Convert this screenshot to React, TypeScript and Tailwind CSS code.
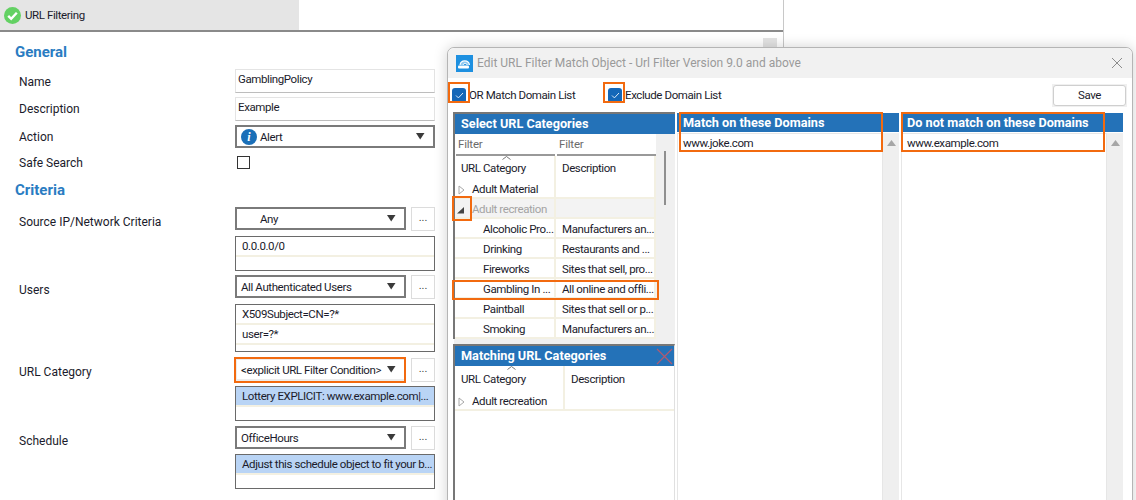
import type { ReactNode } from "react";

const font = "font-['Roboto','Open_Sans',sans-serif]";
const small = "text-[11.5px] tracking-[-0.4px] text-[#1b1b2b]";

function Arrow() {
  return (
    <svg width="9" height="7" viewBox="0 0 9 7" className="shrink-0">
      <path d="M0 0h8.5L4.2 6.5z" fill="#3a3a3a" />
    </svg>
  );
}

function Combo({ text, icon, pad = "pl-[4px]", wide, plain }: { text: string; icon?: ReactNode; pad?: string; wide?: boolean; plain?: boolean }) {
  return (
    <div className={`flex items-center h-[23px] border-2 bg-white pr-[8px] ${plain ? "border-[#ececec]" : "border-[#7a7a7a]"} ${pad} ${wide ? "w-[200px]" : "w-[171px]"}`}>
      {icon}
      <span className={`flex-1 whitespace-nowrap pt-[2px] ${small}`}>{text}</span>
      <Arrow />
    </div>
  );
}

function Dots() {
  return (
    <div className="w-[24px] h-[24px] border border-[#dcdcdc] bg-white flex items-center justify-center text-[11px] text-[#444] pb-[1px]">...</div>
  );
}

function ComboRow({ text, pad, highlight }: { text: string; pad?: string; highlight?: boolean }) {
  return (
    <div className="flex gap-[5px] items-start">
      <div className="relative">
        <Combo text={text} pad={pad} plain={highlight} />
        {highlight && <div className="absolute -left-[1px] -top-[1px] w-[172px] h-[26px] border-[2px] border-[#f26a0f]" />}
      </div>
      <Dots />
    </div>
  );
}

function ListBox({ items, height, selected }: { items: string[]; height: string; selected?: boolean }) {
  return (
    <div className={`w-[200px] border border-[#6a6a6a] bg-white ${height}`}>
      {items.map((t) => (
        <div
          key={t}
          className={`h-[20px] flex items-center pl-[6px] pt-[2px] border-b-2 border-[#f3f0e2] whitespace-nowrap ${small} ${selected ? "bg-[#b9d4f5]" : ""}`}
        >
          {t}
        </div>
      ))}
    </div>
  );
}

function Label({ children, top }: { children: ReactNode; top: string }) {
  return <div className={`w-[235px] pl-[19px] shrink-0 text-[12px] text-[#1b1b2b] ${top}`}>{children}</div>;
}

function Heading({ children, className }: { children: ReactNode; className: string }) {
  return <div className={`pl-[15px] text-[15px] font-bold text-[#2a7cc2] leading-[20px] ${className}`}>{children}</div>;
}

function Check({ label, className, boxClass }: { label: string; className?: string; boxClass: string }) {
  return (
    <div className={`flex items-center relative ${className ?? ""}`}>
      <div className="w-[14px] h-[15px] rounded-[3px] bg-[#1467b8] flex items-center justify-center">
        <svg width="9" height="7" viewBox="0 0 9 7">
          <path d="M1 3.5l2.4 2.4L8 1" fill="none" stroke="#dbe9f7" strokeWidth="1" />
        </svg>
      </div>
      <div className={`absolute border-[2px] border-[#f26a0f] ${boxClass}`} />
      <span className={`ml-[3px] whitespace-nowrap pt-[1px] ${small}`}>{label}</span>
    </div>
  );
}

function Tri() {
  return (
    <svg width="7" height="10" viewBox="0 0 7 10" className="shrink-0">
      <path d="M1 1l5 4-5 4z" fill="none" stroke="#a8a8a8" />
    </svg>
  );
}

function TreeRow({ a, b }: { a: string; b: string }) {
  return (
    <div className={`flex h-[20px] whitespace-nowrap ${small}`}>
      <div className="w-[101px] pl-[28px] pt-[4px] flex items-center border-b-2 border-r-2 border-[#f3f0e2]">{a}</div>
      <div className="w-[100px] pl-[6px] pt-[4px] flex items-center border-b-2 border-r-2 border-[#f3f0e2]">{b}</div>
    </div>
  );
}

function DomainCol({ title, value, mark }: { title: string; value: string; mark: string }) {
  return (
    <div className="w-[222px] shrink-0 flex flex-col relative">
      <div className="h-[20px] mt-[1px] bg-[#2472b8] pl-[6px] flex items-center text-[12.7px] font-bold text-white whitespace-nowrap">{title}</div>
      <div className="flex flex-1 mt-[1px]">
        <div className={`w-[206px] border border-[#e6e6e6] pl-[5px] pt-[1px] h-[400px] ${small}`}>{value}</div>
        <div className="w-[16px] bg-[#efefef] flex justify-center pt-[7px]">
          <svg width="9" height="6" viewBox="0 0 9 6">
            <path d="M4.5 0L9 6H0z" fill="#a6a6a6" />
          </svg>
        </div>
      </div>
      <div className={`absolute top-0 w-[204px] h-[40px] border-[2px] border-[#f26a0f] ${mark}`} />
    </div>
  );
}

export default function App() {
  const rows = [
    ["Alcoholic Pro...", "Manufacturers an..."],
    ["Drinking", "Restaurants and ..."],
    ["Fireworks", "Sites that sell, pro..."],
    ["Gambling In ...", "All online and offli..."],
    ["Paintball", "Sites that sell or p..."],
    ["Smoking", "Manufacturers an..."],
  ];

  return (
    <div className={`relative w-[1136px] h-[500px] overflow-hidden bg-white ${font}`}>
      {/* main policy window */}
      <div className="w-[784px] h-[500px] border-r border-[#c8c8c8] flex flex-col">
        <div className="h-[32px] shrink-0 border-b-2 border-[#8a8a8a]">
          <div className="w-[299px] h-[30px] bg-[#e5e5e5] flex items-center pl-[4px] gap-[4px]">
            <svg width="17" height="17" viewBox="0 0 17 17">
              <circle cx="8.5" cy="8.5" r="8.5" fill="#63d163" />
              <path d="M4.2 8.8l3 3 5.6-6" fill="none" stroke="#fff" strokeWidth="2.4" />
            </svg>
            <span className={`pt-[1px] ${small}`}>URL Filtering</span>
          </div>
        </div>

        <Heading className="mt-[10px]">General</Heading>
        <div className="flex mt-[7px]">
          <Label top="pt-[4px]">Name</Label>
          <div className={`w-[200px] h-[24px] border border-[#e4e4e4] border-b-[#bdbdbd] pl-[2px] leading-[19px] ${small}`}>GamblingPolicy</div>
        </div>
        <div className="flex mt-[4px]">
          <Label top="pt-[3px]">Description</Label>
          <div className={`w-[200px] h-[24px] border border-[#e4e4e4] border-b-[#bdbdbd] pl-[2px] leading-[19px] ${small}`}>Example</div>
        </div>
        <div className="flex mt-[4px]">
          <Label top="pt-[3px]">Action</Label>
          <Combo
            wide
            text="Alert"
            icon={
              <span className="w-[16px] h-[16px] mr-[3px] rounded-full bg-[#1a6fb8] text-white text-[12px] font-bold italic flex items-center justify-center font-['Liberation_Serif',serif]">
                i
              </span>
            }
          />
        </div>
        <div className="flex mt-[8px] h-[15px]">
          <Label top="leading-[15px]">Safe Search</Label>
          <div className="ml-[2px] w-[13px] h-[13px] border border-[#333] bg-white" />
        </div>
        <Heading className="mt-[9px]">Criteria</Heading>

        <div className="flex mt-[7px]">
          <Label top="pt-[6px]">Source IP/Network Criteria</Label>
          <div className="flex flex-col gap-[5px]">
            <ComboRow text="Any" pad="pl-[23px]" />
            <ListBox items={["0.0.0.0/0"]} height="h-[35px]" />
          </div>
        </div>
        <div className="flex mt-[4px]">
          <Label top="pt-[6px]">Users</Label>
          <div className="flex flex-col gap-[5px]">
            <ComboRow text="All Authenticated Users" />
            <ListBox items={["X509Subject=CN=?*", "user=?*"]} height="h-[48px]" />
          </div>
        </div>
        <div className="flex mt-[6px]">
          <Label top="pt-[5px]">URL Category</Label>
          <div className="flex flex-col gap-[4px]">
            <ComboRow text="<explicit URL Filter Condition>" highlight />
            <ListBox items={["Lottery EXPLICIT: www.example.com|..."]} height="h-[35px]" selected />
          </div>
        </div>
        <div className="flex mt-[5px]">
          <Label top="pt-[6px]">Schedule</Label>
          <div className="flex flex-col gap-[4px]">
            <ComboRow text="OfficeHours" />
            <ListBox items={["Adjust this schedule object to fit your b..."]} height="h-[35px]" selected />
          </div>
        </div>
      </div>

      {/* scrollbar stub behind the dialog */}
      <div className="absolute left-[763px] top-[38px] w-[14px] h-[9px] bg-[#e3e3e3]" />

      {/* match object dialog */}
      <div className="absolute left-[447px] top-[47px] w-[686px] h-[470px] rounded-t-[7px] border border-[#b5b5b5] bg-white shadow-[0_0_14px_rgba(0,0,0,0.18)] flex flex-col">
        <div className="h-[30px] shrink-0 bg-[#f1f1f1] rounded-t-[7px] flex items-center pl-[8px]">
          <svg width="17" height="17" viewBox="0 0 17 17" className="shrink-0">
            <rect width="17" height="17" fill="#1e90e0" />
            <path d="M4 10a4.8 4.8 0 0 1 9.5 0" fill="#8fc8ef" stroke="#fff" strokeWidth="1.1" />
            <path d="M7 10a2.2 2.2 0 0 1 4.2 0" fill="#1e90e0" stroke="#fff" strokeWidth="0.9" />
            <rect x="2" y="10.5" width="11" height="3" rx="1" fill="#fff" />
          </svg>
          <span className="ml-[4px] text-[12px] text-[#9a9a9a] whitespace-nowrap">Edit URL Filter Match Object - Url Filter Version 9.0 and above</span>
          <svg width="12" height="12" viewBox="0 0 12 12" className="ml-auto mr-[9px]">
            <path d="M1 1l10 10M11 1L1 11" stroke="#8c8c8c" fill="none" />
          </svg>
        </div>

        <div className="h-[34px] shrink-0 flex items-center pl-[4px]">
          <Check label="OR Match Domain List" className="w-[156px]" boxClass="-left-[4px] -top-[4px] w-[22px] h-[21px]" />
          <Check label="Exclude Domain List" boxClass="-left-[5px] -top-[4px] w-[22px] h-[21px]" />
          <div className="ml-auto mr-[5px] bg-[#f0f0f0] p-[1px]">
            <div className={`w-[73px] h-[21px] rounded-[3px] border border-[#cfcfcf] bg-white flex items-center justify-center pt-[1px] ${small}`}>Save</div>
          </div>
        </div>

        <div className="flex flex-1 pl-[5px] gap-[2px] min-h-0">
          {/* categories column */}
          <div className="w-[222px] shrink-0 flex flex-col">
            <div className="h-[227px] shrink-0 border-l-2 border-t-2 border-[#777] flex flex-col">
              <div className="h-[20px] shrink-0 bg-[#2472b8] pl-[6px] flex items-center text-[12.7px] font-bold text-white">Select URL Categories</div>
              <div className="flex flex-1 min-h-0">
                <div className="w-[201px] shrink-0 flex flex-col relative">
                  <div className="flex h-[22px] mt-[1px] text-[11.5px] tracking-[-0.2px] text-[#6b6b6b] leading-[18px]">
                    <div className="w-[99px] ml-[1px] pl-[2px] border-b-2 border-[#999]">Filter</div>
                    <div className="w-[99px] ml-[2px] pl-[2px] border-b-2 border-[#999]">Filter</div>
                  </div>
                  <div className={`flex h-[24px] relative ${small}`}>
                    <svg width="9" height="4" viewBox="0 0 9 4" className="absolute left-[47px] top-[0px]">
                      <path d="M0.5 3.5L4.5 0.5l4 3" fill="none" stroke="#777" />
                    </svg>
                    <div className="w-[101px] pl-[6px] pt-[3px] flex items-center border-r-2 border-[#f3f0e2]">URL Category</div>
                    <div className="w-[100px] pl-[6px] pt-[3px] flex items-center border-r-2 border-[#f3f0e2]">Description</div>
                  </div>
                  <div className={`flex h-[20px] ${small}`}>
                    <div className="w-[101px] pl-[3px] pt-[4px] flex items-center gap-[7px] border-b-2 border-r-2 border-[#f3f0e2] whitespace-nowrap">
                      <Tri />
                      Adult Material
                    </div>
                    <div className="w-[100px] border-b-2 border-r-2 border-[#f3f0e2]" />
                  </div>
                  <div className={`flex h-[20px] relative bg-[#f3f3f3] ${small}`}>
                    <div className="w-[101px] pl-[2px] pt-[4px] flex items-center gap-[7px] border-b-2 border-r-2 border-[#f3f0e2] whitespace-nowrap text-[#a3a3a3]">
                      <svg width="8" height="7" viewBox="0 0 8 7" className="shrink-0">
                        <path d="M7 0v6.5H0z" fill="#444" />
                      </svg>
                      Adult recreation
                    </div>
                    <div className="w-[100px] border-b-2 border-r-2 border-[#f3f0e2]" />
                    <div className="absolute -left-[3px] -top-[3px] w-[20px] h-[25px] border-[2px] border-[#f26a0f]" />
                  </div>
                  {rows.map(([a, b]) => (
                    <TreeRow key={a} a={a} b={b} />
                  ))}
                  <div className="absolute -left-[3px] top-[146px] w-[207px] h-[20px] border-[2px] border-[#f26a0f]" />
                </div>
                <div className="flex-1 bg-[#f0f0f0] pt-[17px] pl-[8px]">
                  <div className="w-[2px] h-[54px] bg-[#8f8f8f]" />
                </div>
              </div>
            </div>
            <div className="h-[5px] shrink-0 bg-[#f0f0f0] ml-[1px]" />
            <div className="flex-1 border-l-2 border-t-2 border-[#777] border-r border-r-[#e0e0e0] flex flex-col">
              <div className="h-[20px] shrink-0 bg-[#2472b8] pl-[6px] flex items-center justify-between text-[12.7px] font-bold text-white">
                Matching URL Categories
                <svg width="17" height="17" viewBox="0 0 17 17" className="mr-[1px]">
                  <path d="M1 1l15 15M16 1L1 16" stroke="#b05a70" strokeWidth="1.2" fill="none" />
                </svg>
              </div>
              <div className={`flex h-[25px] relative ${small}`}>
                <svg width="9" height="4" viewBox="0 0 9 4" className="absolute left-[52px] top-[0px]">
                  <path d="M0.5 3.5L4.5 0.5l4 3" fill="none" stroke="#777" />
                </svg>
                <div className="w-[110px] pl-[6px] pt-[3px] flex items-center border-r-2 border-[#f3f0e2]">URL Category</div>
                <div className="flex-1 pl-[6px] pt-[3px] flex items-center">Description</div>
              </div>
              <div className={`flex h-[20px] whitespace-nowrap ${small}`}>
                <div className="w-[110px] pl-[3px] pt-[3px] flex items-center gap-[7px] border-b-2 border-r-2 border-[#f3f0e2]">
                  <Tri />
                  Adult recreation
                </div>
                <div className="flex-1 border-b-2 border-[#f3f0e2]" />
              </div>
            </div>
          </div>

          <DomainCol title="Match on these Domains" value="www.joke.com" mark="left-[2px]" />
          <DomainCol title="Do not match on these Domains" value="www.example.com" mark="left-0" />
        </div>
      </div>
    </div>
  );
}
